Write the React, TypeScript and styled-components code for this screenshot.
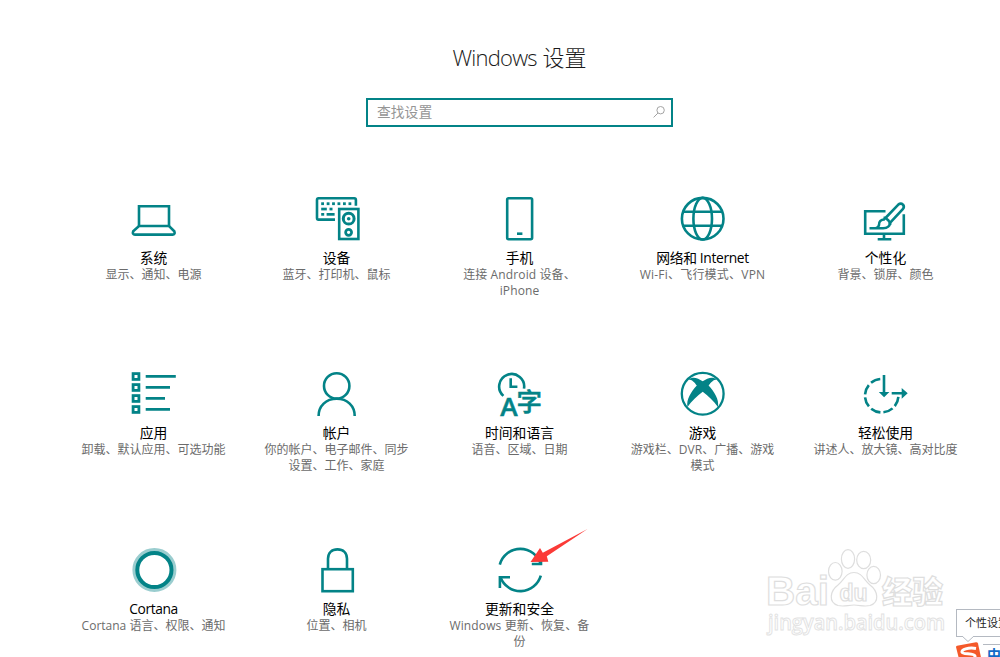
import React from 'react';
import styled, { createGlobalStyle } from 'styled-components';

const teal = '#038387';
const fonts = `'Open Sans', 'Noto Sans', 'Noto Sans CJK SC', sans-serif`;

interface Category {
  title: string;
  description: string;
  icon: React.ReactNode;
  titleTracking?: string;
  tracking?: string;
}

const LaptopIcon = () => (
  <Icon>
    <path d='M8 30V10.2h30V30' />
    <path d='M8 30H38L43.3 35.2Q44.5 38.6 41.5 38.6H4Q1 38.6 2.2 35.2Z' />
  </Icon>
);

const keys = [8.7, 14.2, 19.6, 25, 30.5, 36];

const DevicesIcon = () => (
  <Icon>
    <path d='M21 23.6H4.5Q3 23.6 3 22V4Q3 2.3 4.5 2.3H40.3Q41.9 2.3 41.9 4V9.7' />
    <g fill={teal} stroke='none'>
      {keys.map(x => (
        <rect key={x} x={x - 1.5} y='6.3' width='2.8' height='2.8' />
      ))}
      <rect x='7.2' y='11.7' width='5.6' height='2.7' />
      <rect x='15.5' y='11.7' width='3' height='2.7' />
      <rect x='7.2' y='17' width='3' height='2.7' />
      <rect x='12.6' y='17' width='8' height='2.7' />
      <circle cx='34.7' cy='22.7' r='1.8' />
    </g>
    <rect x='25.2' y='13' width='19.2' height='30' />
    <circle cx='34.7' cy='22.7' r='5.4' strokeWidth='3' />
    <circle cx='34.6' cy='36.3' r='3' strokeWidth='2.7' />
  </Icon>
);

const PhoneIcon = () => (
  <Icon>
    <rect x='10.2' y='2.2' width='24.9' height='41' rx='1.4' />
    <path d='M20 37.7H25.4' />
  </Icon>
);

const GlobeIcon = () => (
  <Icon>
    <circle cx='22.7' cy='22.7' r='20.8' />
    <ellipse cx='22.7' cy='22.7' rx='9.3' ry='20.8' />
    <path d='M3 15.7H42.4M3 29.7H42.4' />
  </Icon>
);

const PersonalizeIcon = () => (
  <Icon>
    <path d='M22.5 15.2H2.2V37.8H40.8V18.3M21 38V43M14.7 43.2H28.3' />
    <path d='M22 22.5L35.3 8.6Q37.8 6.5 40 8.6Q41.8 11 39.8 13.2L27 26.8' />
    <path d='M20.5 21.5Q26.5 23 27.3 29' />
    <path d='M22 23.5C18 23 15.7 26 16 29Q15.2 32.3 11 32.3H6.5H20C24.5 32 26.8 30 27 27' />
  </Icon>
);

const AppsIcon = () => (
  <Icon>
    {[5.4, 16.4, 27.4, 38.4].map(y => (
      <rect key={y} x='2.1' y={y - 2.8} width='5.8' height='5.8' strokeWidth='2.8' />
    ))}
    <path d='M14.7 5.4H44.8M14.7 16.4H39M14.7 27.4H34M14.7 38.4H39' />
  </Icon>
);

const AccountIcon = () => (
  <Icon>
    <circle cx='22.7' cy='14.9' r='12.7' />
    <path d='M4.6 45C4.6 35 12 27.8 22.7 27.8S40.7 35 40.7 45' />
  </Icon>
);

const LanguageIcon = () => (
  <Icon>
    <path d='M6.4 24.9A12.5 12.5 0 1 1 27 17.6' />
    <path d='M13.7 7.3V15.7H20.4' />
    <g fill={teal} strokeWidth='0.5'>
      <Glyph x='3.2' y='44.6' fontSize='25.5' textLength='17.4' lengthAdjust='spacingAndGlyphs'>
        A
      </Glyph>
      <Glyph x='19.6' y='40.2' fontSize='25.5' $weight={500}>
        字
      </Glyph>
    </g>
  </Icon>
);

const XboxIcon = () => (
  <Icon>
    <circle cx='22.7' cy='22.7' r='20.9' strokeWidth='2.3' />
    <path
      d='M8.5 8.5C13 5 18 7.3 22.7 10.3C27.4 7.3 32.4 5 36.9 8.5C33.5 8.5 30.8 11.5 28.6 14.5C34 20.5 39.5 28.5 37.9 36C34 30 28 25 22.7 20.8C17.4 25 11.4 30 7.5 36C5.9 28.5 11.4 20.5 16.8 14.5C14.6 11.5 12 8.5 8.5 8.5Z'
      fill={teal}
      stroke='none'
    />
  </Icon>
);

const EaseIcon = () => (
  <Icon>
    <path
      d='M18.7 8A16.7 16.7 0 1 0 35.4 24.7'
      strokeDasharray='10 3.1'
      strokeDashoffset='-1.5'
    />
    <path d='M21 4V22M28.7 22.3H39' />
    <path d='M15.8 21H26.4L21.1 26.3ZM38.7 16.9V27.7L44.7 22.3Z' fill={teal} stroke='none' />
  </Icon>
);

const CortanaIcon = () => (
  <Icon>
    <circle cx='23.4' cy='23' r='20.1' strokeWidth='3.8' opacity='0.4' />
    <circle cx='23.4' cy='23' r='17.1' strokeWidth='4' />
  </Icon>
);

const LockIcon = () => (
  <Icon>
    <rect x='8.5' y='22.2' width='30.3' height='22' />
    <path d='M14 22V11.7C14 6 17.8 2.4 23.5 2.4S33 6 33 11.7V22' />
  </Icon>
);

const UpdateIcon = () => (
  <Icon>
    <path d='M2.8 17.7A21.2 21.2 0 0 1 43.8 17.7M43.8 28.7A21.2 21.2 0 0 1 3.5 30.2' />
    <path d='M44 6V17H34.8M2.9 41V30.2H13' />
  </Icon>
);

const categories: Category[] = [
  { title: '系统', description: '显示、通知、电源', icon: <LaptopIcon /> },
  { title: '设备', description: '蓝牙、打印机、鼠标', icon: <DevicesIcon /> },
  {
    title: '手机',
    description: '连接 Android 设备、iPhone',
    icon: <PhoneIcon />,
    tracking: '0.12px',
  },
  {
    title: '网络和 Internet',
    description: 'Wi-Fi、飞行模式、VPN',
    icon: <GlobeIcon />,
    titleTracking: '-0.35px',
    tracking: '0.22px',
  },
  { title: '个性化', description: '背景、锁屏、颜色', icon: <PersonalizeIcon /> },
  { title: '应用', description: '卸载、默认应用、可选功能', icon: <AppsIcon /> },
  { title: '帐户', description: '你的帐户、电子邮件、同步设置、工作、家庭', icon: <AccountIcon /> },
  { title: '时间和语言', description: '语音、区域、日期', icon: <LanguageIcon /> },
  { title: '游戏', description: '游戏栏、DVR、广播、游戏模式', icon: <XboxIcon /> },
  { title: '轻松使用', description: '讲述人、放大镜、高对比度', icon: <EaseIcon /> },
  {
    title: 'Cortana',
    description: 'Cortana 语言、权限、通知',
    icon: <CortanaIcon />,
    titleTracking: '-0.4px',
  },
  { title: '隐私', description: '位置、相机', icon: <LockIcon /> },
  {
    title: '更新和安全',
    description: 'Windows 更新、恢复、备份',
    icon: <UpdateIcon />,
    tracking: '0.12px',
  },
];

const App: React.FC = () => (
  <Page>
    <GlobalStyle />
    <Heading>
      <span>Windows</span> 设置
    </Heading>
    <SearchBox>
      <Placeholder>查找设置</Placeholder>
      <svg width='12' height='12' viewBox='0 0 12 12' fill='none' stroke='#a3a3a3'>
        <circle cx='7.6' cy='4.2' r='3.7' />
        <path d='M5 7L0.6 11.4' />
      </svg>
    </SearchBox>

    <Categories>
      {categories.map(({ title, description, icon, titleTracking, tracking }) => (
        <Tile key={title}>
          {icon}
          <Title $tracking={titleTracking}>{title}</Title>
          <Description $tracking={tracking}>{description}</Description>
        </Tile>
      ))}
    </Categories>

    <Pointer width='60' height='36' viewBox='529 528 60 36'>
      <path d='M587.5 529L546.8 556.2L548.3 561.8L530.5 562L540 548L542.8 552.8Z' fill='#fb3a37' />
    </Pointer>

    <Watermark width='190' height='95' viewBox='760 545 190 95'>
      <WatermarkText x='766' y='605' fontSize='41' textLength='63' lengthAdjust='spacingAndGlyphs'>
        Bai
      </WatermarkText>
      <ellipse cx='835.3' cy='571.3' rx='6.8' ry='8.8' />
      <ellipse cx='848' cy='559' rx='6.6' ry='9.3' />
      <ellipse cx='863.7' cy='560' rx='7' ry='8.7' />
      <ellipse cx='873.7' cy='575' rx='6.8' ry='8.7' />
      <path d='M854 572.5C862 572.5 864 580 870 585C878 591 880 602 870 605.5C864 607 860 605 854 605S844 607 838 605.5C828 602 830 591 838 585C844 580 846 572.5 854 572.5Z' />
      <WatermarkText x='839.5' y='600.5' fontSize='23' textLength='28'>
        du
      </WatermarkText>
      <WatermarkText x='882' y='603' fontSize='30.5' $weight={900}>
        经验
      </WatermarkText>
      <WatermarkUrl x='768' y='629.5' fontSize='22' textLength='177' lengthAdjust='spacingAndGlyphs'>
        jingyan.baidu.com
      </WatermarkUrl>
    </Watermark>

    <InputMethod>
      <Tooltip>个性设置</Tooltip>
      <Caret width='14' height='7' viewBox='0 0 14 7'>
        <path d='M0 0L6 5.5L12 0' fill='#fff' stroke='#b4b9c1' />
      </Caret>
      <ImeBar>
        <svg width='27' height='27' viewBox='0 0 27 27'>
          <path d='M0 5Q0 4 1 3.8L20 0.2Q21.5 0 22 1.5L26 20L5 25Z' fill='#f4592a' />
          <path
            d='M20 6.4C12 5.2 5.5 7.5 6 10.2C6.5 12.8 18.5 10.5 19 14C19.3 17.5 12 18.5 7.5 18'
            fill='none'
            stroke='#fff'
            strokeWidth='3'
          />
        </svg>
        <ImeMode>中</ImeMode>
      </ImeBar>
    </InputMethod>
  </Page>
);

export default App;

const GlobalStyle = createGlobalStyle`
  * {
    box-sizing: border-box;
  }

  body {
    margin: 0;
    background: #fff;
    font-family: ${fonts};
    overflow: hidden;
  }
`;

const Page = styled.main`
  position: relative;
  display: flex;
  flex-direction: column;
  align-items: center;

  width: 1000px;
  height: 657px;
  padding: 41px 0 0 39px;
  overflow: hidden;
`;

const Heading = styled.h1`
  height: 32px;
  margin: 0;

  color: #1a1a1a;
  font-size: 22px;
  font-weight: 300;
  line-height: 32px;
  white-space: nowrap;

  > span {
    letter-spacing: -0.75px;
  }
`;

const SearchBox = styled.div`
  display: flex;
  justify-content: space-between;
  align-items: center;

  width: 307px;
  height: 29px;
  margin-top: 25px;
  padding: 0 6px 2px 9px;
  border: 2px solid ${teal};
`;

const Placeholder = styled.span`
  color: #959595;
  font-size: 13.8px;
  line-height: 20px;
`;

const Categories = styled.section`
  display: grid;
  grid-template-columns: repeat(5, 183px);
  grid-template-rows: 175px 176px 110px;

  margin-top: 69px;
`;

const Tile = styled.article`
  display: flex;
  flex-direction: column;
  align-items: center;
`;

const Icon = styled.svg.attrs({
  width: 45,
  height: 45,
  viewBox: '0 0 45 45',
  fill: 'none',
  stroke: teal,
  strokeWidth: 2.6,
})`
  flex: none;
  overflow: visible;
`;

const Glyph = styled.text<{ $weight?: number }>`
  font-family: ${fonts};
  font-weight: ${({ $weight }) => $weight || 600};
`;

const Title = styled.h2<{ $tracking?: string }>`
  margin: 8px 0 0;

  color: #000;
  font-size: 13.8px;
  font-weight: 400;
  line-height: 17px;
  letter-spacing: ${({ $tracking }) => $tracking || 'normal'};
`;

const Description = styled.p<{ $tracking?: string }>`
  width: 147px;
  margin: 1px 0 0;

  color: #6b6b6b;
  font-size: 12px;
  line-height: 16px;
  letter-spacing: ${({ $tracking }) => $tracking || 'normal'};
  text-align: center;
`;

const Pointer = styled.svg`
  position: absolute;
  top: 528px;
  left: 529px;
`;

const Watermark = styled.svg`
  position: absolute;
  top: 545px;
  left: 760px;

  fill: #fff;
  stroke: #dedede;
  stroke-width: 1.2px;
`;

const WatermarkText = styled.text<{ $weight?: number }>`
  font-family: 'Liberation Sans', 'Noto Sans CJK SC', sans-serif;
  font-weight: ${({ $weight }) => $weight || 700};
`;

const WatermarkUrl = styled.text`
  font-family: 'Open Sans', sans-serif;
  font-weight: 600;
  stroke: #e2e2e2;
  stroke-width: 1px;
`;

const InputMethod = styled.aside`
  position: absolute;
  top: 609px;
  left: 956px;

  width: 44px;
  height: 48px;
  overflow: hidden;
`;

const Tooltip = styled.div`
  width: 70px;
  height: 28px;
  padding-left: 8px;
  border: 1px solid #b4b9c1;
  background: #fff;

  color: #222;
  font-size: 11px;
  line-height: 26px;
  white-space: nowrap;
`;

const Caret = styled.svg`
  position: absolute;
  top: 27px;
  left: 6px;
`;

const ImeBar = styled.div`
  display: flex;

  width: 80px;
  margin-top: 5px;
`;

const ImeMode = styled.span`
  margin-top: 2px;
  padding-left: 4px;
  border-top: 1px solid #b4b9c1;

  color: #1269c7;
  font-size: 14px;
  font-weight: 700;
  line-height: 20px;
`;
